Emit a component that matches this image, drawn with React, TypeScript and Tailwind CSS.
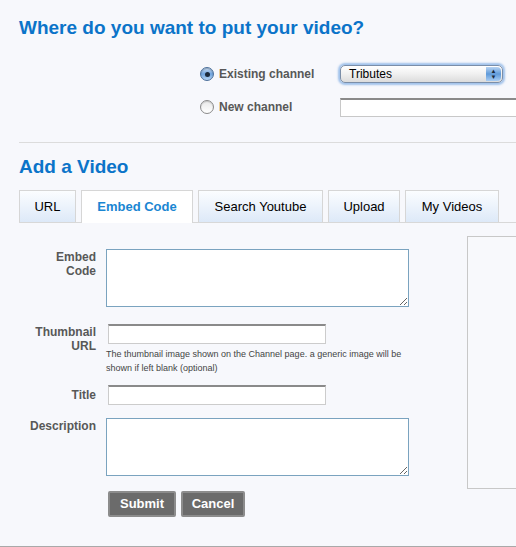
import React from 'react'

const tabs = [
  { label: 'URL', w: 'w-[57px]' },
  { label: 'Embed Code', w: 'w-[112px]', active: true },
  { label: 'Search Youtube', w: 'w-[125px]' },
  { label: 'Upload', w: 'w-[72px]' },
  { label: 'My Videos', w: 'w-[94px]' },
]

function Radio({ checked }: { checked?: boolean }) {
  if (checked) {
    return (
      <span className="flex h-[14px] w-[14px] shrink-0 items-center justify-center rounded-full border border-[#4a6f9a] bg-gradient-to-b from-[#cfe2f7] via-[#6ea3dd] to-[#b8d6f5] shadow-[inset_0_1px_1px_rgba(0,0,0,0.25)]">
        <span className="h-[5px] w-[5px] rounded-full bg-[#1b2a3c]" />
      </span>
    )
  }
  return (
    <span className="h-[14px] w-[14px] shrink-0 rounded-full border border-[#8a8a8a] bg-gradient-to-b from-[#e9e9e9] to-white shadow-[inset_0_1px_1px_rgba(0,0,0,0.15)]" />
  )
}

function FormLabel({ children }: { children: React.ReactNode }) {
  return (
    <div className="w-[77px] shrink-0 text-right text-[12px] font-bold leading-[14px] text-[#585858]">
      {children}
    </div>
  )
}

export default function App() {
  return (
    <div className="relative h-[547px] w-[516px] overflow-hidden border-b border-[#a9a9a9] bg-[#f7f8fc] font-['Liberation_Sans',Arial,sans-serif]">
      <div className="pl-[19px] pt-[17px]">
        <h1 className="text-[19px] font-bold leading-[22px] text-[#0b74c9]">Where do you want to put your video?</h1>
      </div>

      <div className="mt-[26px] flex flex-col gap-[15px] pl-[200px]">
        <div className="flex h-[18px] items-center">
          <Radio checked />
          <span className="ml-[5px] w-[121px] shrink-0 text-[12px] font-bold text-[#585858]">Existing channel</span>
          <div className="relative flex h-[18px] w-[163px] shrink-0 items-center rounded-[5px] border border-[#7b8ea8] bg-gradient-to-b from-white via-[#f0f0f0] to-[#dcdcdc] shadow-[0_0_2px_2px_rgba(90,150,220,0.55)]">
            <span className="pl-[8px] text-[12px] leading-none text-black">Tributes</span>
            <span className="absolute right-[1px] top-[1px] flex h-[14px] w-[15px] flex-col items-center justify-center rounded-r-[4px] bg-gradient-to-b from-[#b7d3f2] via-[#5f9ad9] to-[#a9cdf3] text-[6px] leading-[6px] text-[#1c2a3a]">
              <span>▲</span>
              <span>▼</span>
            </span>
          </div>
        </div>
        <div className="flex h-[18px] items-center">
          <Radio />
          <span className="ml-[5px] w-[121px] shrink-0 text-[12px] font-bold text-[#585858]">New channel</span>
          <div className="h-[19px] w-[190px] shrink-0 border border-t-2 border-[#c8c8c8] border-t-[#8a8a8a] bg-white" />
        </div>
      </div>

      <div className="ml-[19px] mt-[26px] h-px bg-[#dcdcdc]" />

      <h2 className="ml-[19px] mt-[13px] text-[19px] font-bold leading-[22px] text-[#0b74c9]">Add a Video</h2>

      <div className="ml-[19px] mt-[12px] flex gap-[5px] border-b border-[#d8d8d8]">
        {tabs.map((t) => (
          <div
            key={t.label}
            className={`${t.w} flex h-[32px] items-center justify-center border border-b-0 border-[#d6d6d6] text-[13px] ${
              t.active
                ? '-mb-px h-[33px] bg-white font-bold text-[#1a86d2]'
                : 'bg-gradient-to-b from-[#fbfdff] to-[#dde9f8] text-black'
            }`}
          >
            {t.label}
          </div>
        ))}
      </div>

      <div className="flex">
        <div className="w-[467px] shrink-0 pl-[19px] pt-[26px]">
          <div className="flex">
            <FormLabel>
              <div className="pt-[1px]">Embed<br />Code</div>
            </FormLabel>
            <textarea className="ml-[10px] h-[58px] w-[303px] border border-[#7aa3bf] bg-white outline-none" />
          </div>

          <div className="mt-[17px] flex">
            <FormLabel>
              <div className="pt-[1px]">Thumbnail<br />URL</div>
            </FormLabel>
            <div className="ml-[10px]">
              <div className="ml-[2px] h-[20px] w-[218px] border border-t-2 border-[#cccccc] border-t-[#8a8a8a] bg-white" />
              <p className="mt-[3px] w-[310px] text-[9px] leading-[14px] text-[#444]">
                The thumbnail image shown on the Channel page. a generic image will be shown if left blank (optional)
              </p>
            </div>
          </div>

          <div className="mt-[10px] flex">
            <FormLabel>
              <div className="pt-[3px]">Title</div>
            </FormLabel>
            <div className="ml-[12px] h-[20px] w-[218px] border border-t-2 border-[#cccccc] border-t-[#8a8a8a] bg-white" />
          </div>

          <div className="mt-[13px] flex">
            <FormLabel>
              <div className="pt-[1px]">Description</div>
            </FormLabel>
            <textarea className="ml-[10px] h-[58px] w-[303px] border border-[#7aa3bf] bg-white outline-none" />
          </div>

          <div className="ml-[89px] mt-[15px] flex gap-[5px]">
            <button className="h-[26px] w-[68px] rounded-[2px] border-2 border-[#8c8c8c] bg-[#6b6b6b] text-[13px] font-bold text-white">
              Submit
            </button>
            <button className="h-[26px] w-[64px] rounded-[2px] border-2 border-[#8c8c8c] bg-[#6b6b6b] text-[13px] font-bold text-white">
              Cancel
            </button>
          </div>
        </div>

        <div className="mt-[13px] h-[253px] w-[80px] shrink-0 border border-[#c8c8c8] bg-[#f8f9fc]" />
      </div>
    </div>
  )
}
